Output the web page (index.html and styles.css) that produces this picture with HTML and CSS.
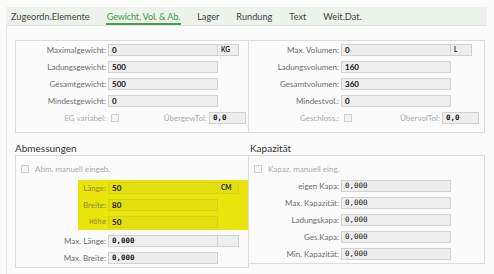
FILE: index.html
```html
<!doctype html>
<html>
	<head>
		<meta charset="utf-8">
		<title>Material - Gewicht, Vol. &amp; Ab.</title>
		<link rel="stylesheet" href="styles.css">
	</head>
	<body>
		<div class="tabs">
			<span class="tab">Zugeordn.Elemente</span>
			<span class="tab active">Gewicht, Vol. &amp; Ab.</span>
			<span class="tab">Lager</span>
			<span class="tab">Rundung</span>
			<span class="tab">Text</span>
			<span class="tab">Weit.Dat.</span>
		</div>
		<div class="content">
			<div class="columns">
				<div class="panel">
					<div class="row"><span class="label">Maximalgewicht:</span><span class="field">0</span><span class="unit">KG</span></div>
					<div class="row"><span class="label">Ladungsgewicht:</span><span class="field">500</span></div>
					<div class="row"><span class="label">Gesamtgewicht:</span><span class="field">500</span></div>
					<div class="row"><span class="label">Mindestgewicht:</span><span class="field">0</span></div>
					<div class="row">
						<span class="label off">EG variabel:</span><span class="check"></span>
						<span class="label off wide">ÜbergewTol:</span><span class="field short mono">0,0</span>
					</div>
				</div>
				<div class="panel">
					<div class="row"><span class="label">Max. Volumen:</span><span class="field">0</span><span class="unit">L</span></div>
					<div class="row"><span class="label">Ladungsvolumen:</span><span class="field">160</span></div>
					<div class="row"><span class="label">Gesamtvolumen:</span><span class="field">360</span></div>
					<div class="row"><span class="label">Mindestvol.:</span><span class="field">0</span></div>
					<div class="row">
						<span class="label off">Geschloss.:</span><span class="check"></span>
						<span class="label off wide">ÜbervolTol:</span><span class="field short mono">0,0</span>
					</div>
				</div>
			</div>
			<div class="columns">
				<div>
					<div class="title">Abmessungen</div>
					<div class="panel lower">
						<div class="row"><span class="check first"></span><span class="label off free">Abm. manuell eingeb.</span></div>
						<div class="marked">
							<div class="row"><span class="label">Länge:</span><span class="field">50</span><span class="unit">CM</span></div>
							<div class="row"><span class="label">Breite:</span><span class="field">80</span></div>
							<div class="row"><span class="label small">Höhe</span><span class="field">50</span></div>
						</div>
						<div class="row"><span class="label">Max. Länge:</span><span class="field mono">0,000</span><span class="unit"></span></div>
						<div class="row"><span class="label">Max. Breite:</span><span class="field mono">0,000</span></div>
					</div>
				</div>
				<div>
					<div class="title">Kapazität</div>
					<div class="panel lower">
						<div class="row"><span class="check first"></span><span class="label off free">Kapaz. manuell eing.</span></div>
						<div class="row"><span class="label">eigen Kapa:</span><span class="field mono thin">0,000</span></div>
						<div class="row"><span class="label">Max. Kapazität:</span><span class="field mono thin">0,000</span></div>
						<div class="row"><span class="label">Ladungskapa:</span><span class="field mono thin">0,000</span></div>
						<div class="row"><span class="label">Ges.Kapa:</span><span class="field mono thin">0,000</span></div>
						<div class="row"><span class="label">Min. Kapazität:</span><span class="field mono thin">0,000</span></div>
					</div>
				</div>
			</div>
		</div>
	</body>
</html>
```

FILE: styles.css
```css
body {
	margin: 0;
	padding: 7px 7px 0 6px;
	background-color: #fbfbfb;
	font-family: Lato, "Liberation Sans", sans-serif;
	color: #333;
}
.tabs {
	display: flex;
	height: 18px;
	padding-left: 4px;
	background-color: #eef2ed;
	border-bottom: 1px solid #dfe4de;
	font-size: 9.2px;
}
.tab {
	display: flex;
	align-items: center;
	padding: 0 1px;
	margin-right: 15px;
	color: #444;
}
.tab.active {
	color: #3f9a3f;
	box-shadow: inset 0 -2px 0 #4aa04a;
	letter-spacing: -0.2px;
}
.content {
	border-left: 1px solid #e4e4e4;
	padding: 14px 2px 10px 8px;
}
.columns {
	display: grid;
	grid-template-columns: 234px 236px;
}
.panel {
	border: 1px solid #dcdcdc;
	padding: 3px 0 8px 0;
	display: flex;
	flex-direction: column;
	gap: 5px;
}
.columns + .columns .panel {
	padding-bottom: 3px;
}
.columns > .panel + .panel,
.columns > div + div .panel {
	border-left: none;
}
.title {
	font-size: 10px;
	color: #333;
	height: 22px;
	line-height: 30px;
}
.columns > div + div .title {
	padding-left: 1px;
}
.row {
	display: flex;
	align-items: center;
	height: 12px;
	font-size: 8px;
}
.label {
	width: 90px;
	margin-right: 2px;
	text-align: right;
	color: #6d6d6d;
	white-space: nowrap;
}
.label.off {
	color: #ababab;
}
.label.wide {
	width: 88px;
	margin-right: 2px;
}
.label.free {
	width: auto;
	text-align: left;
	margin-left: 6px;
}
.field {
	box-sizing: border-box;
	width: 110px;
	height: 12px;
	padding-left: 3px;
	background-color: #eeeeee;
	border: 1px solid #d2d2d2;
	font-size: 8px;
	font-weight: bold;
	color: #111;
	line-height: 10px;
}
.field.short {
	width: 37px;
}
.mono {
	font-family: "DejaVu Sans Mono", monospace;
	font-size: 7.5px;
}
.mono.thin {
	font-weight: normal;
}
.unit {
	box-sizing: border-box;
	width: 22px;
	height: 12px;
	margin-left: -1px;
	padding-left: 3px;
	background-color: #eeeeee;
	border: 1px solid #d2d2d2;
	font-size: 6.5px;
	font-weight: bold;
	color: #222;
	line-height: 10px;
}
.check {
	box-sizing: border-box;
	width: 8px;
	height: 8px;
	margin-left: 3px;
	background-color: #f4f4f4;
	border: 1px solid #cfcfcf;
}
.check.first {
	margin-left: 5px;
}
.lower {
	padding-top: 6px;
}
.lower .row:first-child {
	height: 13px;
}
.marked {
	display: flex;
	flex-direction: column;
	gap: 5px;
	margin-left: 62px;
	padding: 1px 0 2px 0;
	background-color: #e8e40c;
}
.marked .label {
	width: 28px;
	color: #8f8a3a;
}
.marked .label.small {
	font-family: "DejaVu Sans Mono", monospace;
	font-size: 7px;
}
.marked .field,
.marked .unit {
	background-color: #e4e010;
	border-color: #d6d216;
}
```
